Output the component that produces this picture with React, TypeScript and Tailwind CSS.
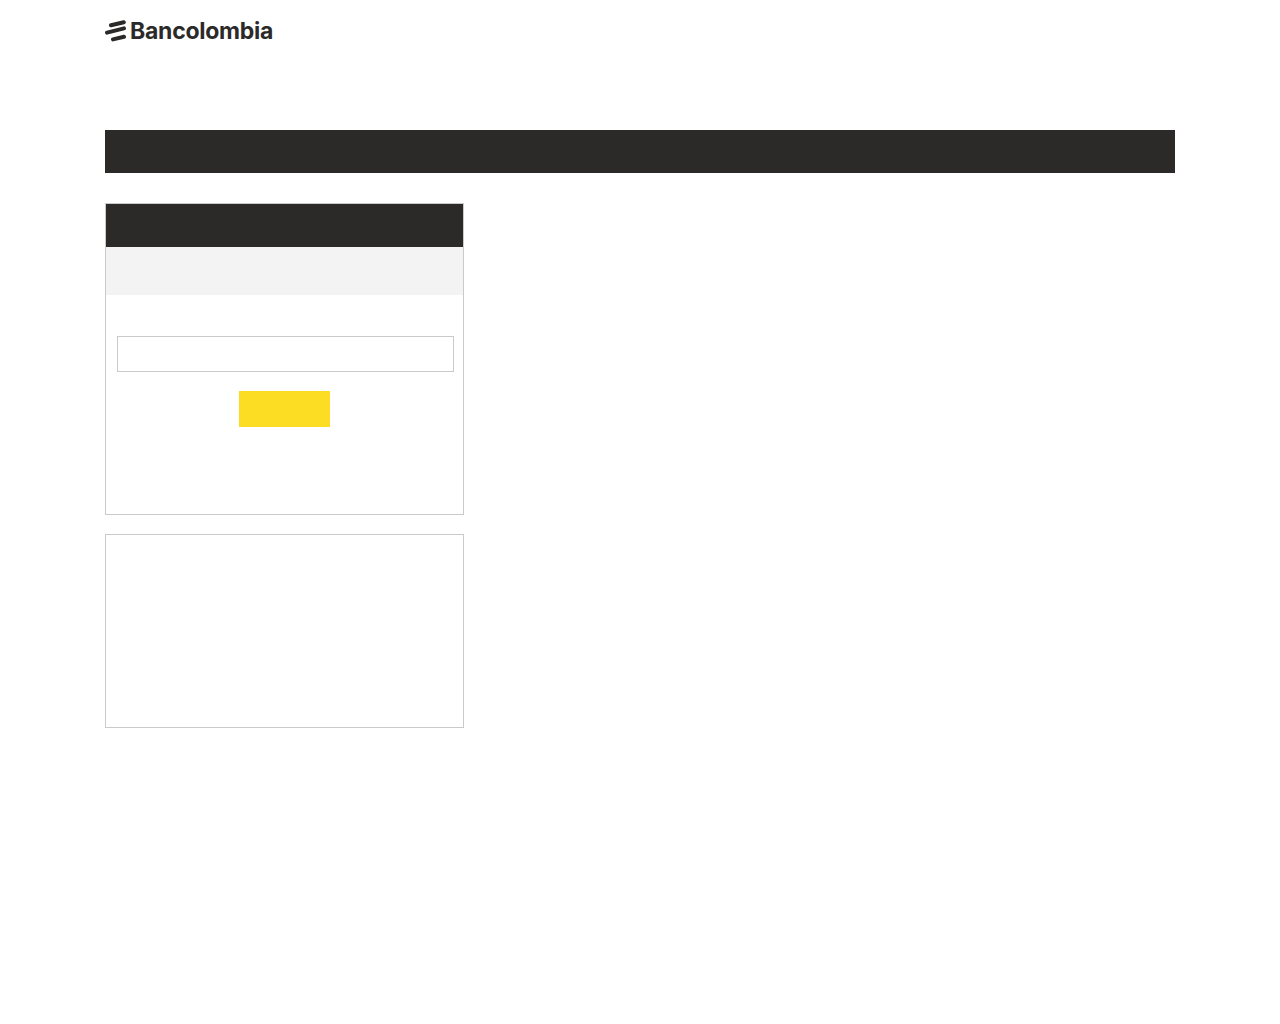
export default function App() {
  return (
    <div className="min-h-[1024px] bg-white" style={{ fontFamily: "Inter, sans-serif" }}>
      <div className="ml-[105px] w-[1070px]">
        <header className="flex h-[130px] items-start pt-[19px]">
          <div className="flex items-center gap-[4px]">
            <svg width="21" height="24" viewBox="0 0 21 24" fill="none" stroke="#2c2a29" strokeWidth="4" strokeLinecap="round" className="shrink-0">
              <path d="M6 6.2 L18.8 3.2" />
              <path d="M2 13.6 L19 9.4" />
              <path d="M8 20.4 L19 17.8" />
            </svg>
            <span className="text-[23px] leading-[24px] font-bold tracking-[-0.25px] text-[#2c2a29]">Bancolombia</span>
          </div>
        </header>
        <div className="h-[43px] bg-[#2c2a29]" />
        <div className="mt-[30px] w-[359px] space-y-[19px]">
          <section className="h-[312px] border border-[#cacaca]">
            <div className="h-[43px] bg-[#2c2a29]" />
            <div className="h-[48px] bg-[#f3f3f3]" />
            <div className="ml-[11px] mt-[41px] h-[36px] w-[337px] border border-[#cacaca]" />
            <div className="mt-[19px] flex justify-center">
              <button type="button" className="h-[36px] w-[91px] bg-[#fddc24]" />
            </div>
          </section>
          <section className="h-[194px] border border-[#cacaca]" />
        </div>
      </div>
    </div>
  );
}
